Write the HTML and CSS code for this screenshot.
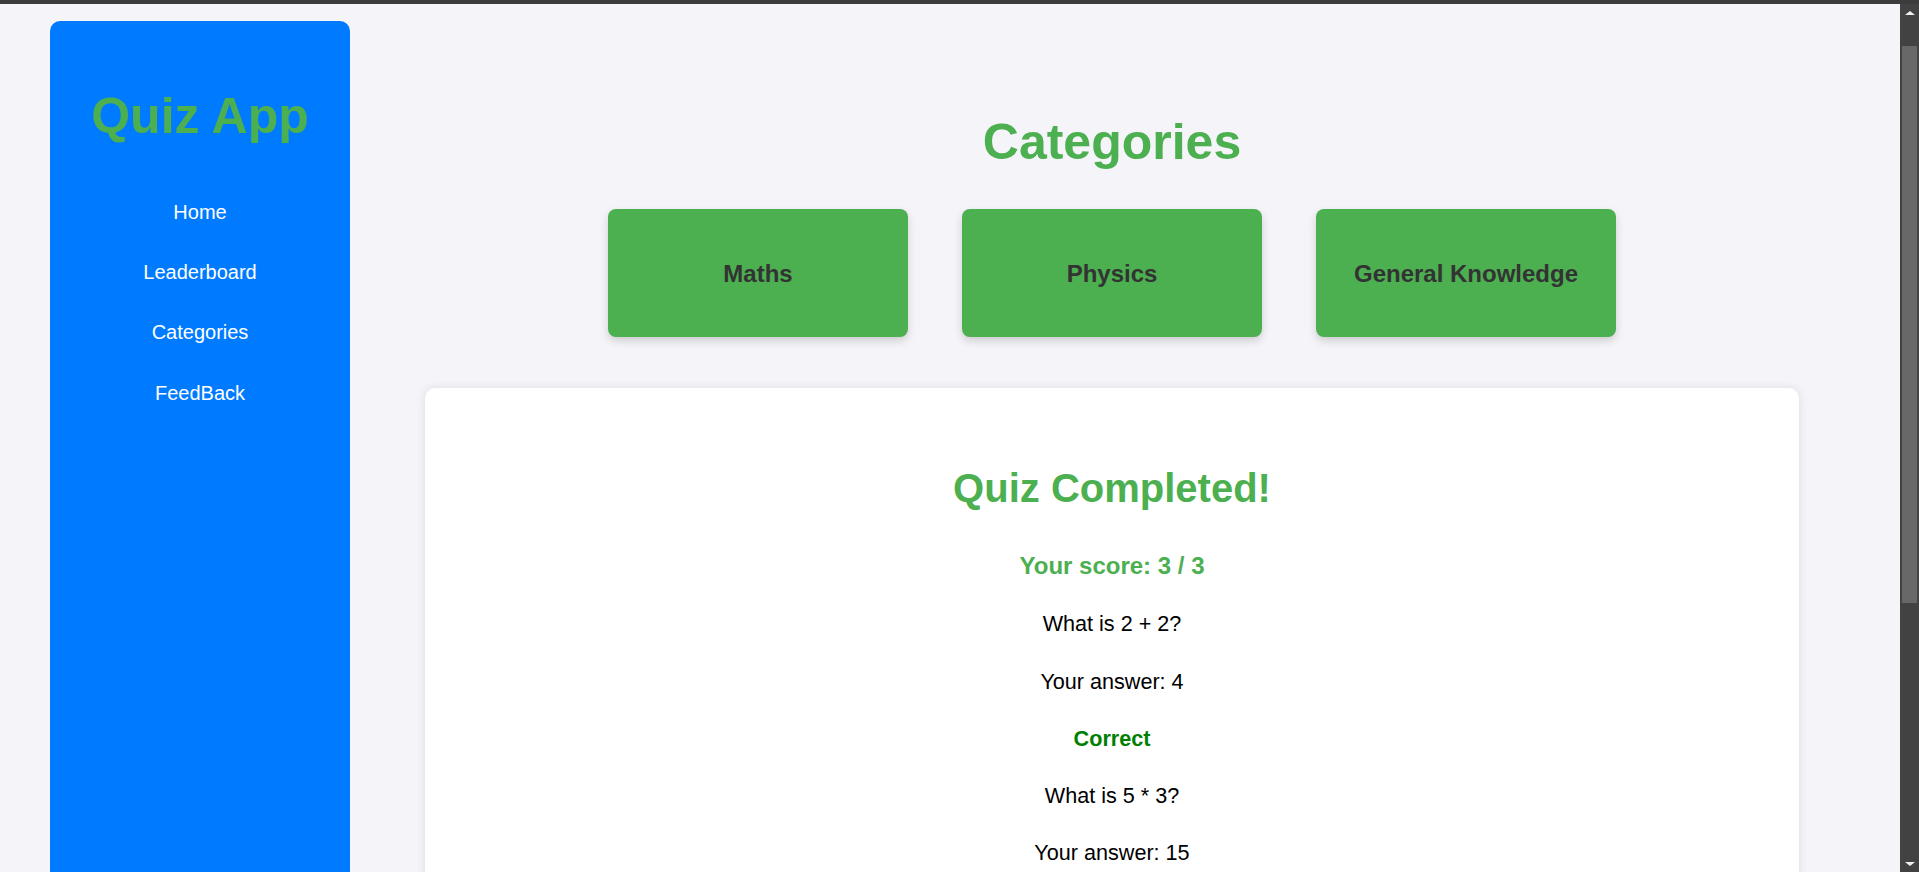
FILE: index.html
```html
<!DOCTYPE html>
<html lang="en">
<head>
<meta charset="utf-8">
<title>Quiz App</title>
<link rel="stylesheet" href="styles.css">
</head>
<body>
<div class="frame">
  <div class="topbar"></div>
  <div class="window">
    <div class="viewport">
      <aside class="sidebar">
        <h1 class="brand">Quiz App</h1>
        <nav class="nav">
          <a class="nav-link" href="#">Home</a>
          <a class="nav-link" href="#">Leaderboard</a>
          <a class="nav-link" href="#">Categories</a>
          <a class="nav-link" href="#">FeedBack</a>
        </nav>
      </aside>
      <main class="main">
        <h1 class="page-title">Categories</h1>
        <div class="category-list">
          <div class="category-card">Maths</div>
          <div class="category-card">Physics</div>
          <div class="category-card">General Knowledge</div>
        </div>
        <section class="result-card">
          <h2 class="result-title">Quiz Completed!</h2>
          <p class="score">Your score: 3 / 3</p>
          <div class="answers">
            <p class="line">What is 2 + 2?</p>
            <p class="line">Your answer: 4</p>
            <p class="line verdict">Correct</p>
            <p class="line">What is 5 * 3?</p>
            <p class="line">Your answer: 15</p>
            <p class="line verdict">Correct</p>
          </div>
        </section>
      </main>
    </div>
    <div class="scrollbar">
      <div class="sb-arrow sb-up"></div>
      <div class="sb-track"><div class="sb-thumb"></div></div>
      <div class="sb-arrow sb-down"></div>
    </div>
  </div>
</div>
</body>
</html>
```
FILE: styles.css
```css
* { box-sizing: border-box; }

html, body {
  margin: 0;
  height: 100%;
  overflow: hidden;
}

body {
  font-family: "Liberation Sans", Arial, sans-serif;
  background: #f4f4f9;
}

.frame {
  height: 100%;
  display: flex;
  flex-direction: column;
}

.topbar {
  height: 4px;
  flex: none;
  background: #3c3c3c;
}

.window {
  flex: 1;
  display: flex;
  min-height: 0;
}

.viewport {
  flex: 1;
  display: flex;
  overflow: hidden;
  background: #f4f4f9;
}

/* Sidebar */
.sidebar {
  flex: none;
  width: 300px;
  margin: 17px 0 0 50px;
  padding-top: 67px;
  background: #007bff;
  border-radius: 10px 10px 0 0;
  text-align: center;
}

.brand {
  margin: 0;
  font-size: 50px;
  font-weight: bold;
  color: #4caf50;
  line-height: 57.5px;
}

.nav {
  display: flex;
  flex-direction: column;
  margin-top: 37px;
}

.nav-link {
  display: block;
  padding: 18.6px 0;
  font-size: 20px;
  line-height: 23px;
  color: #ffffff;
  text-decoration: none;
}

/* Main */
.main {
  flex: 1;
  min-width: 0;
  padding: 110px 101px 0 75px;
}

.page-title {
  margin: 0;
  text-align: center;
  font-size: 50px;
  line-height: 57.5px;
  font-weight: bold;
  color: #4caf50;
}

.category-list {
  display: flex;
  justify-content: center;
  gap: 54px;
  margin-top: 37.5px;
}

.category-card {
  width: 300px;
  padding: 50.5px 0 49.5px;
  background: #4caf50;
  color: #333333;
  font-size: 24px;
  line-height: 27.6px;
  font-weight: bold;
  text-align: center;
  border-radius: 8px;
  box-shadow: 0 4px 8px rgba(0, 0, 0, 0.16);
}

.result-card {
  margin-top: 51.5px;
  background: #ffffff;
  border-radius: 10px;
  box-shadow: 0 0 10px rgba(0, 0, 0, 0.1);
  padding: 77px 20px 40px;
  text-align: center;
}

.result-title {
  margin: 0;
  font-size: 40px;
  line-height: 46px;
  font-weight: bold;
  color: #4caf50;
}

.score {
  margin: 41px 0 0;
  font-size: 24px;
  line-height: 27.6px;
  font-weight: bold;
  color: #4caf50;
}

.answers {
  display: flex;
  flex-direction: column;
  gap: 32.3px;
  margin-top: 32.8px;
}

.line {
  margin: 0;
  font-size: 21.6px;
  line-height: 24.84px;
  color: #000000;
}

.verdict {
  font-weight: bold;
  color: #008000;
}

/* Fake browser scrollbar */
.scrollbar {
  flex: none;
  width: 19px;
  background: #424242;
  display: flex;
  flex-direction: column;
  align-items: center;
}

.sb-arrow {
  flex: none;
  height: 17px;
  width: 100%;
  display: flex;
  justify-content: center;
  align-items: center;
}

.sb-arrow::before {
  content: "";
  width: 0;
  height: 0;
  border-left: 5px solid transparent;
  border-right: 5px solid transparent;
}

.sb-up::before { border-bottom: 4px solid #f0f0f0; }
.sb-down::before { border-top: 4px solid #f0f0f0; }

.sb-track {
  flex: 1;
  width: 100%;
  padding: 25px 2px 0;
}

.sb-thumb {
  height: 557px;
  background: #686868;
}
```
